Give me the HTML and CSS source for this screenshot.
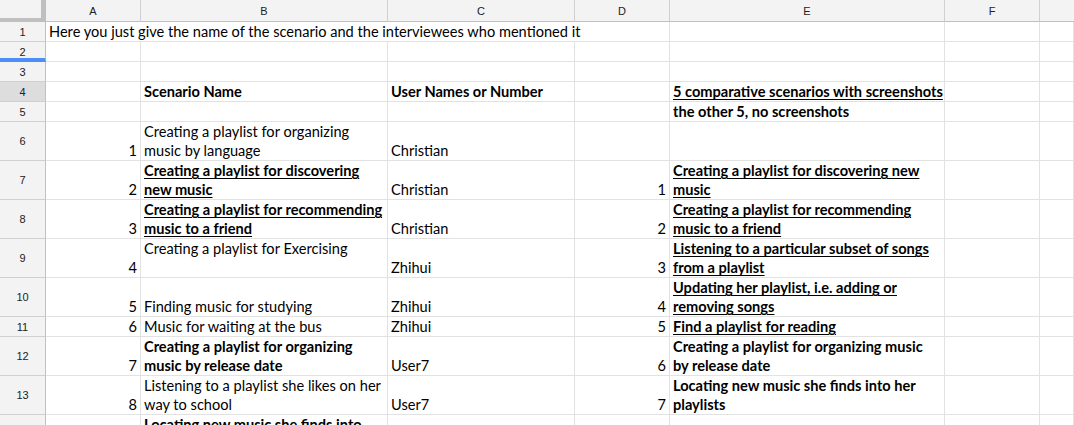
FILE: index.html
```html
<!DOCTYPE html>
<html>
<head>
<meta charset="utf-8">
<link rel="stylesheet" href="styles.css">
</head>
<body>
<div class="sheet">
  <!-- header row -->
  <div class="corner"></div>
  <div class="colhead">A</div>
  <div class="colhead">B</div>
  <div class="colhead">C</div>
  <div class="colhead">D</div>
  <div class="colhead">E</div>
  <div class="colhead">F</div>
  <div class="colhead last"></div>

  <!-- row 1 -->
  <div class="rowhead">1</div>
  <div class="cell span4"><span>Here you just give the name of the scenario and the interviewees who mentioned it</span></div>
  <div class="cell"></div><div class="cell"></div><div class="cell"></div>

  <!-- row 2 -->
  <div class="rowhead freeze">2</div>
  <div class="cell"></div><div class="cell"></div><div class="cell"></div><div class="cell"></div><div class="cell"></div><div class="cell"></div><div class="cell"></div>

  <!-- row 3 -->
  <div class="rowhead">3</div>
  <div class="cell"></div><div class="cell"></div><div class="cell"></div><div class="cell"></div><div class="cell"></div><div class="cell"></div><div class="cell"></div>

  <!-- row 4 -->
  <div class="rowhead selected">4</div>
  <div class="cell"></div>
  <div class="cell b"><span>Scenario Name</span></div>
  <div class="cell b"><span>User Names or Number</span></div>
  <div class="cell"></div>
  <div class="cell b u"><span>5 comparative scenarios with screenshots</span></div>
  <div class="cell"></div><div class="cell"></div>

  <!-- row 5 -->
  <div class="rowhead">5</div>
  <div class="cell"></div><div class="cell"></div><div class="cell"></div><div class="cell"></div>
  <div class="cell b"><span>the other 5, no screenshots</span></div>
  <div class="cell"></div><div class="cell"></div>

  <!-- row 6 -->
  <div class="rowhead">6</div>
  <div class="cell num"><span>1</span></div>
  <div class="cell"><span>Creating a playlist for organizing<br>music by language</span></div>
  <div class="cell"><span>Christian</span></div>
  <div class="cell"></div><div class="cell"></div><div class="cell"></div><div class="cell"></div>

  <!-- row 7 -->
  <div class="rowhead">7</div>
  <div class="cell num"><span>2</span></div>
  <div class="cell b u"><span>Creating a playlist for discovering<br>new music</span></div>
  <div class="cell"><span>Christian</span></div>
  <div class="cell num"><span>1</span></div>
  <div class="cell b u"><span>Creating a playlist for discovering new<br>music</span></div>
  <div class="cell"></div><div class="cell"></div>

  <!-- row 8 -->
  <div class="rowhead">8</div>
  <div class="cell num"><span>3</span></div>
  <div class="cell b u"><span>Creating a playlist for recommending<br>music to a friend</span></div>
  <div class="cell"><span>Christian</span></div>
  <div class="cell num"><span>2</span></div>
  <div class="cell b u"><span>Creating a playlist for recommending<br>music to a friend</span></div>
  <div class="cell"></div><div class="cell"></div>

  <!-- row 9 -->
  <div class="rowhead">9</div>
  <div class="cell num"><span>4</span></div>
  <div class="cell top"><span>Creating a playlist for Exercising</span></div>
  <div class="cell"><span>Zhihui</span></div>
  <div class="cell num"><span>3</span></div>
  <div class="cell b u"><span>Listening to a particular subset of songs<br>from a playlist</span></div>
  <div class="cell"></div><div class="cell"></div>

  <!-- row 10 -->
  <div class="rowhead">10</div>
  <div class="cell num"><span>5</span></div>
  <div class="cell"><span>Finding music for studying</span></div>
  <div class="cell"><span>Zhihui</span></div>
  <div class="cell num"><span>4</span></div>
  <div class="cell b u"><span>Updating her playlist, i.e. adding or<br>removing songs</span></div>
  <div class="cell"></div><div class="cell"></div>

  <!-- row 11 -->
  <div class="rowhead">11</div>
  <div class="cell num"><span>6</span></div>
  <div class="cell"><span>Music for waiting at the bus</span></div>
  <div class="cell"><span>Zhihui</span></div>
  <div class="cell num"><span>5</span></div>
  <div class="cell b u"><span>Find a playlist for reading</span></div>
  <div class="cell"></div><div class="cell"></div>

  <!-- row 12 -->
  <div class="rowhead">12</div>
  <div class="cell num"><span>7</span></div>
  <div class="cell b"><span>Creating a playlist for organizing<br>music by release date</span></div>
  <div class="cell"><span>User7</span></div>
  <div class="cell num"><span>6</span></div>
  <div class="cell b"><span>Creating a playlist for organizing music<br>by release date</span></div>
  <div class="cell"></div><div class="cell"></div>

  <!-- row 13 -->
  <div class="rowhead">13</div>
  <div class="cell num"><span>8</span></div>
  <div class="cell"><span>Listening to a playlist she likes on her<br>way to school</span></div>
  <div class="cell"><span>User7</span></div>
  <div class="cell num"><span>7</span></div>
  <div class="cell b"><span>Locating new music she finds into her<br>playlists</span></div>
  <div class="cell"></div><div class="cell"></div>

  <!-- row 14 -->
  <div class="rowhead">14</div>
  <div class="cell num"><span>9</span></div>
  <div class="cell b"><span>Locating new music she finds into<br>her playlists</span></div>
  <div class="cell"><span>User7</span></div>
  <div class="cell"></div><div class="cell"></div><div class="cell"></div><div class="cell"></div>
</div>
</body>
</html>
```

FILE: styles.css
```css
html, body {
  margin: 0;
  padding: 0;
  background: #ffffff;
  overflow: hidden;
  height: 425px;
}

.sheet {
  display: grid;
  grid-template-columns: 46px 95px 247px 187px 95px 275px 95px 1fr;
  grid-template-rows: 22px 20px 20px 20px 20px 20px 39px 39px 39px 39px 39px 20px 39px 39px 39px;
  width: 1074px;
  font-family: "Lato", "Liberation Sans", sans-serif;
  font-size: 14.6px;
  color: #000000;
}

.sheet > div {
  box-sizing: border-box;
}

.corner {
  background: #f3f3f3;
  border-right: 5px solid #bfbfbf;
  border-bottom: 4px solid #bfbfbf;
}

.colhead {
  background: #f3f3f3;
  border-right: 1px solid #d0d0d0;
  border-bottom: 1px solid #c0c0c0;
  font-family: "Liberation Sans", Arial, sans-serif;
  font-size: 11px;
  color: #222222;
  display: flex;
  align-items: center;
  justify-content: center;
}

.colhead.last {
  border-right: none;
}

.rowhead {
  background: #f3f3f3;
  border-right: 1px solid #c0c0c0;
  border-bottom: 1px solid #d0d0d0;
  font-family: "Liberation Sans", Arial, sans-serif;
  font-size: 11px;
  color: #222222;
  display: flex;
  align-items: center;
  justify-content: center;
}

.rowhead.selected {
  background: #dddddd;
}

.rowhead.freeze {
  border-bottom: 4px solid #4d8ff7;
  padding-top: 3px;
}

.cell {
  border-right: 1px solid #e2e2e2;
  border-bottom: 1px solid #e2e2e2;
  padding: 0 3px 0 3px;
  display: flex;
  align-items: flex-end;
  line-height: 19px;
  white-space: nowrap;
  overflow: hidden;
}

.cell.span4 {
  grid-column: span 4;
}

.cell.num {
  justify-content: flex-end;
}

.cell.top {
  align-items: flex-start;
}

.cell.b {
  font-weight: bold;
}

.cell.u {
  text-decoration: underline;
  text-underline-offset: 2px;
}
```
